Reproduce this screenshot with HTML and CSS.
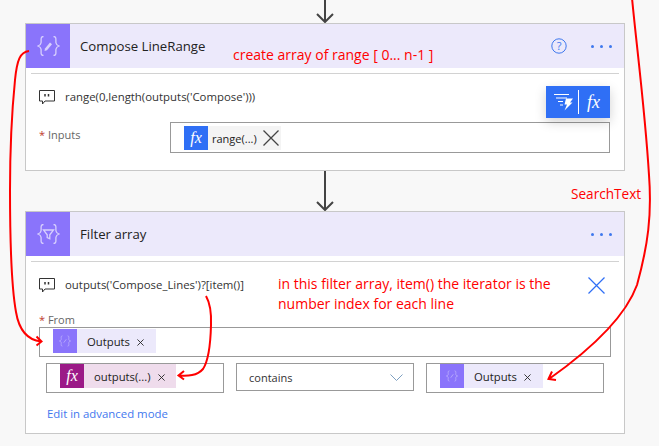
FILE: index.html
```html
<!DOCTYPE html>
<html lang="en">
<head>
<meta charset="utf-8">
<title>Flow</title>
<link rel="stylesheet" href="styles.css">
</head>
<body>
<main class="canvas">
  <div class="connector first"><svg width="18" height="23" viewBox="0 0 18 23"><path d="M9 0V22M1 14l8 8 8-8" class="conn-line"/></svg></div>

  <section class="card first-card">
    <header class="head">
      <div class="tile"><svg width="23" height="20" viewBox="2 2 22 20" class="brace"><path d="M8 2.500C4.500 2.500 6 6 5.500 9 5.200 10.800 4 11.500 2.500 12 4 12.500 5.200 13.200 5.500 15 6 18 4.500 21.500 8 21.500M18 2.500C21.500 2.500 20 6 20.500 9 20.800 10.800 22 11.500 23.500 12 22 12.500 20.800 13.200 20.500 15 20 18 21.500 21.500 18 21.500"/><path d="M9.500 14.500l5-6 2 1.800-5 6-2.500.7z" class="fillish"/></svg></div>
      <h2 class="title">Compose LineRange</h2>
      <div class="actions">
        <svg width="16" height="16" viewBox="0 0 16 16" class="help"><circle cx="8" cy="8" r="7.200"/><text x="8" y="12" text-anchor="middle" class="help-mark">?</text></svg>
        <div class="dots"><i></i><i></i><i></i></div>
      </div>
    </header>
    <div class="rule"></div>
    <div class="comment">
      <svg width="16" height="15" viewBox="0 0 16 15" class="bubble"><path d="M.5.500H15.500V11H6L3.500 14V11H.5Z"/><path d="M6 4v2.500M9.500 4v2.500" class="bubble-dots"/></svg>
      <span class="comment-text">range(0,length(outputs('Compose')))</span>
    </div>
    <div class="field">
      <label class="field-label"><b class="req">*</b> Inputs</label>
      <div class="box input-box">
        <span class="chip grey">
          <span class="chip-icon blue">fx</span>
          <span class="chip-name tight">range(...)</span>
          <svg width="16" height="16" viewBox="0 0 16 16" class="big-x"><path d="M.5.500l15 15M15.500.500l-15 15"/></svg>
        </span>
      </div>
    </div>
  </section>

  <div class="connector middle"><svg width="18" height="40" viewBox="0 0 18 40"><path d="M9 0V39M1 31l8 8 8-8" class="conn-line"/></svg></div>

  <section class="card second-card">
    <header class="head">
      <div class="tile"><svg width="23" height="20" viewBox="2 2 22 20" class="brace"><path d="M8 2.500C4.500 2.500 6 6 5.500 9 5.200 10.800 4 11.500 2.500 12 4 12.500 5.200 13.200 5.500 15 6 18 4.500 21.500 8 21.500M18 2.500C21.500 2.500 20 6 20.500 9 20.800 10.800 22 11.500 23.500 12 22 12.500 20.800 13.200 20.500 15 20 18 21.500 21.500 18 21.500"/><path d="M8 8h10L14.300 12.800v4L11.700 15.500V12.800z"/></svg></div>
      <h2 class="title">Filter array</h2>
      <div class="actions"><div class="dots"><i></i><i></i><i></i></div></div>
    </header>
    <div class="rule"></div>
    <div class="comment">
      <svg width="16" height="15" viewBox="0 0 16 15" class="bubble"><path d="M.5.500H15.500V11H6L3.500 14V11H.5Z"/><path d="M6 4v2.500M9.500 4v2.500" class="bubble-dots"/></svg>
      <span class="comment-text">outputs('Compose_Lines')?[item()]</span>
      <svg width="17" height="17" viewBox="0 0 17 17" class="close"><path d="M.5.500l16 16M16.500.500l-16 16"/></svg>
    </div>
    <div class="from-label"><b class="req">*</b> From</div>
    <div class="box from-box">
      <span class="chip lilac from-chip">
        <span class="chip-icon violet"><svg width="14" height="12" viewBox="0 0 16 14" class="mini"><path d="M5 1C2.500 1 4 4 3.500 5.500 3.300 6.300 2.500 6.700 1.500 7 2.500 7.300 3.300 7.700 3.500 8.500 4 10 2.500 13 5 13M11 1C13.500 1 12 4 12.500 5.500 12.700 6.300 13.500 6.700 14.500 7 13.500 7.300 12.700 7.700 12.500 8.500 12 10 13.500 13 11 13M6.500 9l3-4"/></svg></span>
        <span class="chip-name">Outputs</span>
        <svg width="7" height="7" viewBox="0 0 8 8" class="small-x"><path d="M.5.500l7 7M7.500.500l-7 7"/></svg>
      </span>
    </div>
    <div class="condition">
      <div class="box cond-box">
        <span class="chip pink func-chip">
          <span class="chip-icon purple">fx</span>
          <span class="chip-name">outputs(...)</span>
          <svg width="7" height="7" viewBox="0 0 8 8" class="small-x"><path d="M.5.500l7 7M7.500.500l-7 7"/></svg>
        </span>
      </div>
      <div class="box select-box">
        <span class="select-text">contains</span>
        <svg width="13" height="7" viewBox="0 0 13 7" class="chev"><path d="M.5.500l6 6 6-6"/></svg>
      </div>
      <div class="box cond-box">
        <span class="chip lilac from-chip">
          <span class="chip-icon violet"><svg width="14" height="12" viewBox="0 0 16 14" class="mini"><path d="M5 1C2.500 1 4 4 3.500 5.500 3.300 6.300 2.500 6.700 1.500 7 2.500 7.300 3.300 7.700 3.500 8.500 4 10 2.500 13 5 13M11 1C13.500 1 12 4 12.500 5.500 12.700 6.300 13.500 6.700 14.500 7 13.500 7.300 12.700 7.700 12.500 8.500 12 10 13.500 13 11 13M6.500 9l3-4"/></svg></span>
          <span class="chip-name">Outputs</span>
          <svg width="7" height="7" viewBox="0 0 8 8" class="small-x"><path d="M.5.500l7 7M7.500.500l-7 7"/></svg>
        </span>
      </div>
    </div>
    <a class="advanced" href="#">Edit in advanced mode</a>
  </section>

  <div class="popup">
    <svg width="20" height="17" viewBox="0 0 20 17" class="lightning"><path d="M0 .500H15M2 4H13M4 7.500H9M6 11H9" class="ln"/><path d="M12 4.500H19L16 8.500H18.500L10.500 16.500 13 10.500H10.500Z" class="bolt"/></svg>
    <span class="sep"></span>
    <span class="popup-fx">fx</span>
  </div>

  <svg class="ink" width="659" height="446" viewBox="0 0 659 446">
    <path d="M29 51C20 52 17 60 15 80 12 110 10 150 10 190 10 250 12 290 16 312 19 330 28 340 41 341.500M36.500 336.500L41.500 341.500 36.500 345.500"/>
    <path d="M206 296C210 303 211.500 312 211 325 210.500 345 209 360 203 369 197 376 188 376 178.500 375.500M184 371L178.500 375.500 184 379.500"/>
    <path d="M632 -2C637 50 645 110 649 175 652 215 648 245 637 285 625 318 590 350 549 379M552 371.500L548.500 379 556 380"/>
  </svg>
  <p class="note note-range">create array of range [ 0... n-1 ]</p>
  <p class="note note-search">SearchText</p>
  <p class="note note-filter">in this filter array, item() the iterator is the<br>number index for each line</p>
</main>
</body>
</html>
```

FILE: styles.css
```css
* { box-sizing: border-box; }
html, body { margin: 0; padding: 0; }
body {
  background: #f8f8f8;
  font-family: "Open Sans", "Noto Sans", sans-serif;
  color: #222;
  overflow: hidden;
}
.canvas { position: relative; width: 659px; height: 446px; padding-left: 25px; }

.connector { width: 600px; display: flex; justify-content: center; }
.connector.first { height: 23px; }
.connector.middle { height: 40px; }
.conn-line { fill: none; stroke: #444; stroke-width: 2; }

.card { width: 600px; background: #fff; border: 1px solid #c8c8c8; }
.first-card { height: 148px; }
.second-card { height: 223px; }

.head { height: 44px; background: #ece9fb; display: flex; align-items: center; }
.tile { width: 44px; height: 44px; background: #8a74fb; display: flex; align-items: center; justify-content: center; }
.brace { fill: none; stroke: #d8d0fd; stroke-width: 1.300; }
.fillish { fill: #d8d0fd; stroke: none; }
.title { margin: 0 0 0 10px; font-size: 13.200px; font-weight: 400; color: #222; flex: 1; }
.actions { display: flex; align-items: center; gap: 24px; padding-right: 12px; }
.help { fill: none; stroke: #3f78ee; stroke-width: 1; }
.help-mark { font-family: "Open Sans", sans-serif; font-size: 11px; fill: #3f78ee; stroke: none; }
.dots { display: flex; gap: 6px; }
.dots i { width: 3px; height: 3px; border-radius: 50%; background: #3f78ee; }

.rule { margin: 5px 5px 0; height: 1px; background: #d2d2d2; }

.comment { display: flex; align-items: center; height: 20px; margin-top: 13px; padding: 0 19px 0 13px; }
.bubble { fill: none; stroke: #333; stroke-width: 1; }
.bubble-dots { stroke-width: 1.500; }
.comment-text { margin: -2px 0 0 10px; font-size: 11.400px; color: #333; flex: 1; white-space: nowrap; }
.close { fill: none; stroke: #2f6ff5; stroke-width: 1.200; }

.box { border: 1px solid #999; background: #fff; display: flex; }
.field { display: flex; margin: 15px 14px 0 13px; }
.field-label { width: 131px; font-size: 11px; color: #666; line-height: 26px; }
.req { color: #c0392b; font-weight: 400; }
.input-box { flex: 1; height: 31px; padding: 3px 0 0 13px; }

.chip { display: inline-flex; align-items: center; height: 24px; }
.chip-icon { width: 24px; height: 24px; display: flex; align-items: center; justify-content: center; color: #fff; font-family: "Liberation Serif", serif; font-style: italic; font-size: 16px; }
.chip-name { margin-left: 10px; font-size: 11.300px; color: #222; white-space: nowrap; }
.chip-name.tight { margin-left: 4px; font-size: 11px; }
.grey { background: #f4f4f4; width: 97px; }
.blue { background: #2f6ff5; }
.violet { background: #8a74fb; }
.purple { background: #9b1a87; }
.lilac { background: #ece9fb; }
.pink { background: #efdcec; }
.big-x { margin-left: 6px; fill: none; stroke: #444; stroke-width: 1.300; }
.small-x { margin: 3px 0 0 7px; fill: none; stroke: #222; stroke-width: 1; }
.mini { fill: none; stroke: #b9acfc; stroke-width: 1; }

.from-label { margin: 17px 0 0 13px; height: 15px; line-height: 15px; font-size: 11px; color: #666; }
.from-box { margin: 0 13px; height: 30px; padding: 1px 0 0 13px; }
.from-chip { width: 103px; }
.func-chip { width: 116px; }
.condition { display: flex; gap: 12px; margin: 6px 20px 0; align-items: flex-start; }
.cond-box { width: 178px; height: 30px; padding: 0 0 0 13px; }
.select-box { width: 178px; height: 28px; align-items: center; justify-content: space-between; padding: 0 10px 0 12px; }
.select-text { font-size: 11px; color: #333; }
.chev { fill: none; stroke: #7d9fc0; stroke-width: 1; }
.advanced { display: block; margin: 13px 0 0 21px; line-height: 16px; font-size: 11.400px; color: #3f78ee; text-decoration: none; }

.popup { position: absolute; left: 546px; top: 86px; width: 64px; height: 32px; background: #2f6ff5; display: flex; align-items: center; box-shadow: 0 4px 12px rgba(0,0,0,.18); padding-left: 8px; }
.lightning { flex: none; }
.ln { fill: none; stroke: #fff; stroke-width: 1; }
.bolt { fill: #fff; }
.sep { width: 1px; height: 24px; background: #fff; margin-left: 4px; }
.popup-fx { margin-left: 8px; color: #fff; font-family: "Liberation Serif", serif; font-style: italic; font-size: 18px; }

.ink { position: absolute; left: 0; top: 0; fill: none; stroke: #f00; stroke-width: 2; pointer-events: none; }
.note { position: absolute; margin: 0; color: #f00; font-size: 14px; line-height: 20px; white-space: nowrap; }
.note-range { left: 233px; top: 45px; }
.note-search { left: 571px; top: 184px; font-size: 13.600px; }
.note-filter { left: 278px; top: 274px; }
```
